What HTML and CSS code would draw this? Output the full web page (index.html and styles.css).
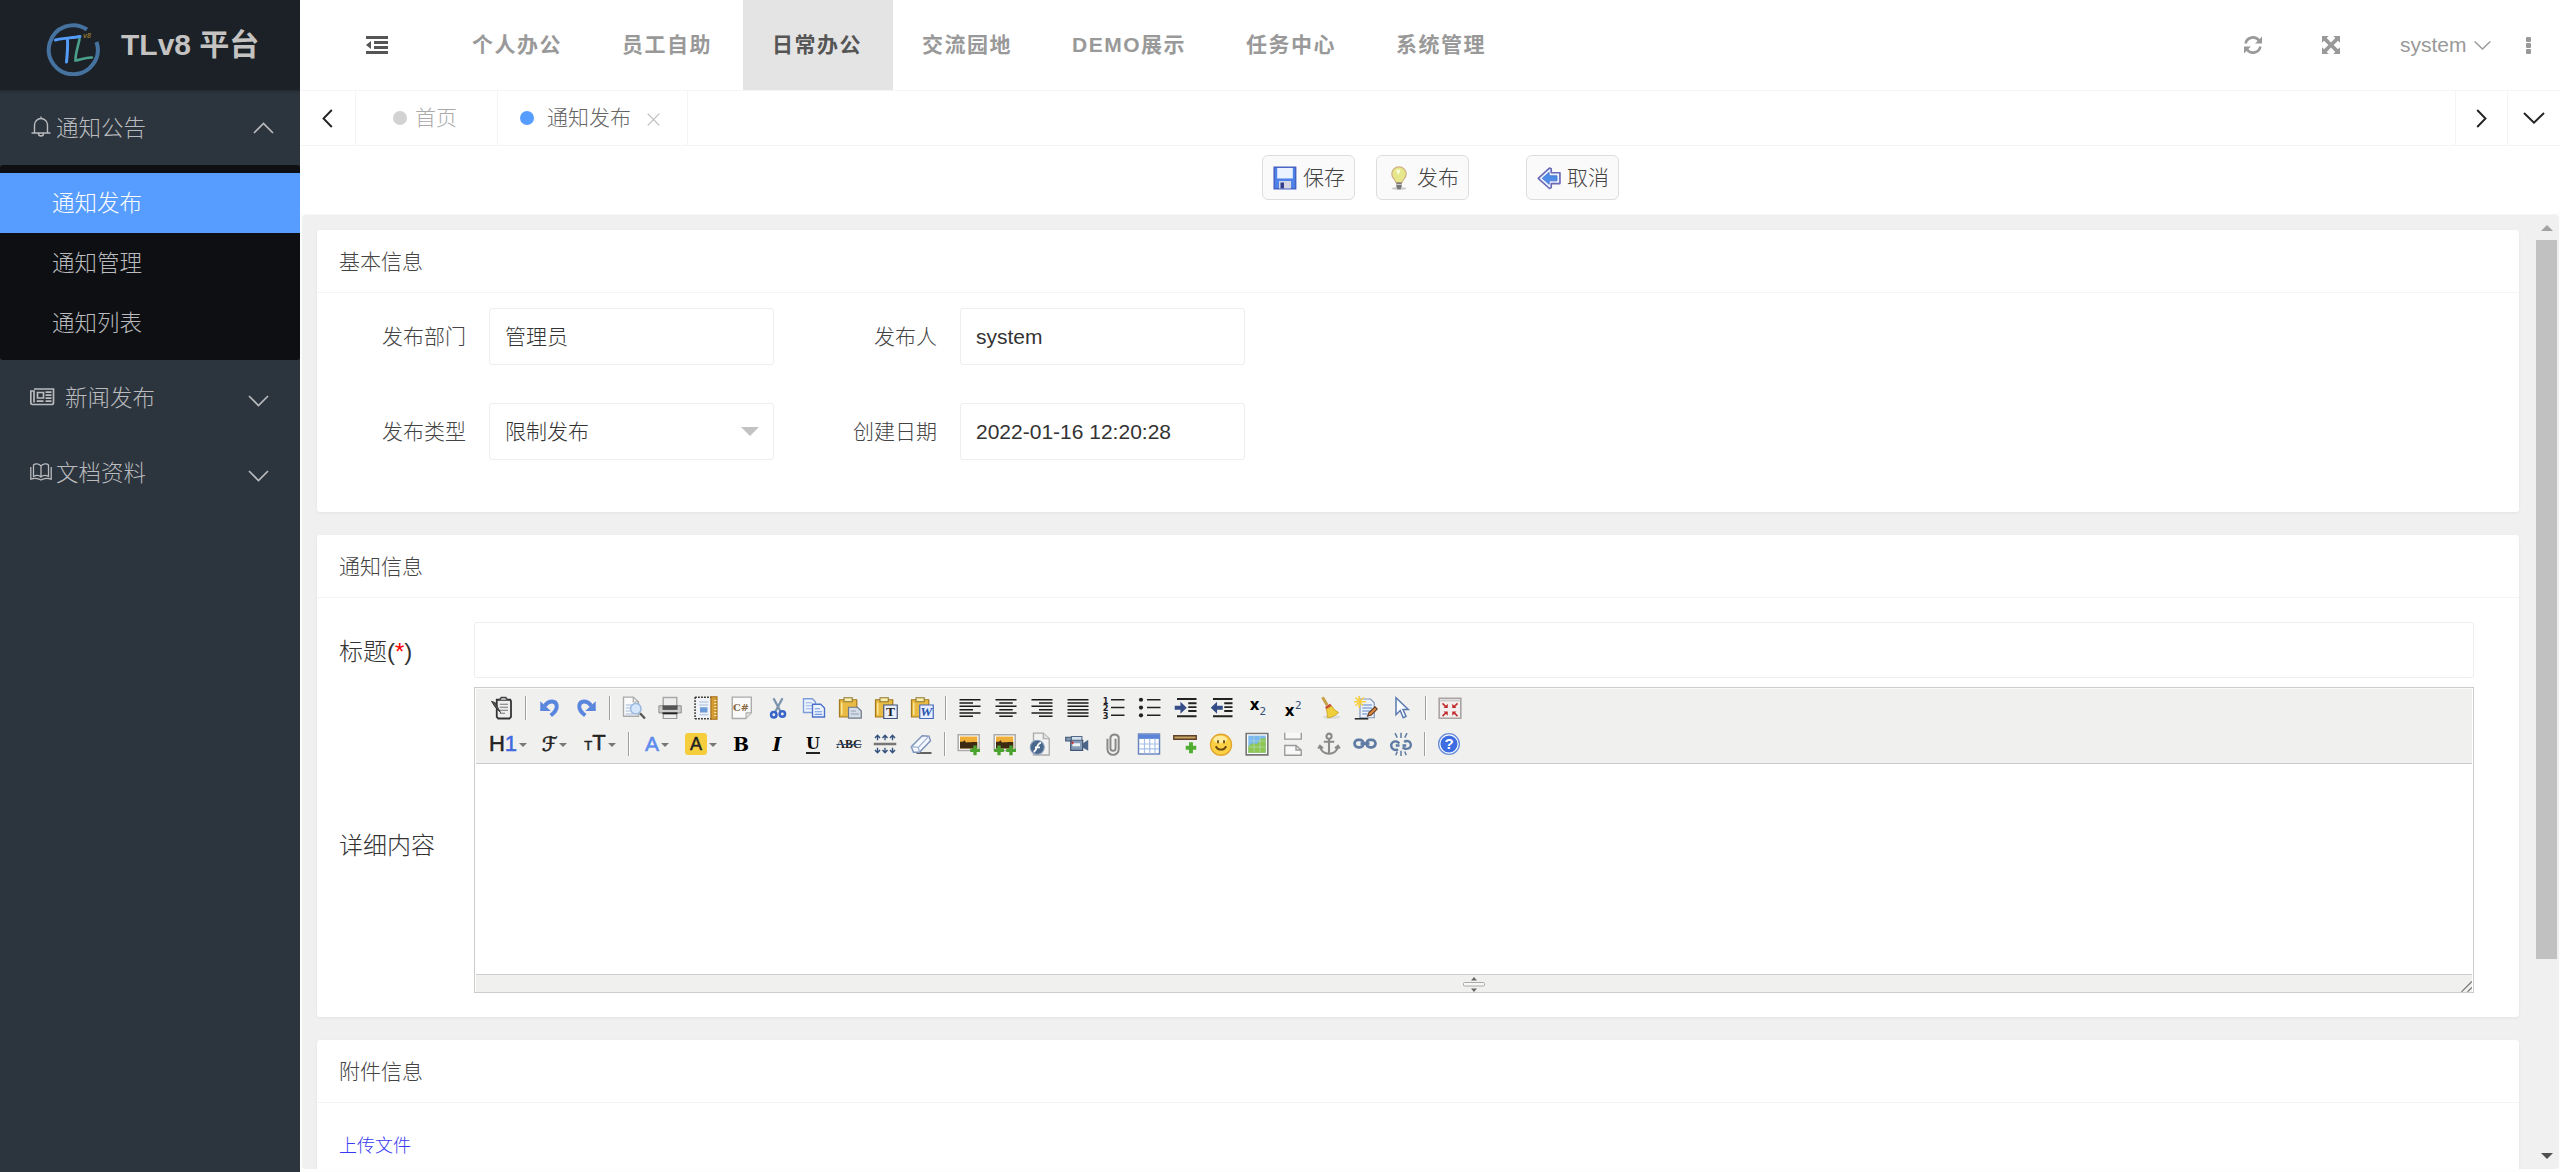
FILE: index.html
```html
<!DOCTYPE html>
<html lang="zh-CN">
<head>
<meta charset="utf-8">
<title>TLv8 平台</title>
<link rel="stylesheet" href="styles.css">
</head>
<body>
<div class="app">
  <aside class="side">
    <div class="logo">
      <svg class="logo-mark" width="54" height="54" viewBox="0 0 54 54" fill="none" stroke-linecap="round">
        <path d="M41 7.500A24.500 24.500 0 1 0 50.500 20" stroke="#4672a0" stroke-width="4" stroke-linecap="butt"/>
        <path d="M9.500 18C17 16 26 16 34 14.500M21.500 17.500C22 26 21 34 20.500 40" stroke="#559cf8" stroke-width="3"/>
        <path d="M33.500 17C32 25 29 33 29.500 38.500C34 38 40 35 46 35.500" stroke="#4b9f8d" stroke-width="2.600"/>
        <text x="37" y="15.500" class="logo-ver">v8</text>
      </svg>
      <h1 class="logo-name">TLv8 平台</h1>
    </div>
    <nav class="menu">
      <a class="menu-item">
        <svg class="bell" width="20" height="22" viewBox="0 0 20 22" fill="none" stroke="currentColor" stroke-width="1.400"><path d="M3.500 17V9a6.500 6.500 0 0 1 13 0v8M.5 17h19M7.500 17.500a2.500 2.500 0 0 0 5 0M10 .5v2"/></svg>
        <span class="menu-text">通知公告</span>
        <svg class="arrow arrow-up" width="21" height="12" viewBox="0 0 21 12" fill="none" stroke="currentColor" stroke-width="1.700"><path d="M1 11l9.500-9.500L20 11"/></svg>
      </a>
      <div class="submenu">
        <a class="sub-item active">通知发布</a>
        <a class="sub-item">通知管理</a>
        <a class="sub-item">通知列表</a>
      </div>
      <a class="menu-item wide">
        <svg class="news" width="25" height="18" viewBox="0 0 25 18" fill="none" stroke="currentColor" stroke-width="1.700"><path d="M4 1h19.500v13.500a2 2 0 0 1-2 2H2.500a2 2 0 0 1-1.700-2V3H4v11.500M7.500 4.500h6V10h-6zM15.500 4.200h6M15.500 7.200h6M15.500 10.200h6M6.700 13.200h6.800M15.500 13.200h6"/></svg>
        <span class="menu-text">新闻发布</span>
        <svg class="arrow" width="21" height="12" viewBox="0 0 21 12" fill="none" stroke="currentColor" stroke-width="1.700"><path d="M1 1l9.500 9.500L20 1"/></svg>
      </a>
      <a class="menu-item">
        <svg class="book" width="22" height="18" viewBox="0 0 22 18" fill="none" stroke="currentColor" stroke-width="1.300"><path d="M11 3C9 .3 5 .3 3.500 2v11.500C6 12 9 12 11 14c2-2 5-2 7.500-.5V2C17 .3 13 .3 11 3v11M.8 4v12.200C5 14.800 8 15 11 17c3-2 6-2.200 10.200-.8V4"/></svg>
        <span class="menu-text">文档资料</span>
        <svg class="arrow" width="21" height="12" viewBox="0 0 21 12" fill="none" stroke="currentColor" stroke-width="1.700"><path d="M1 1l9.500 9.500L20 1"/></svg>
      </a>
    </nav>
  </aside>

  <div class="main">
    <header class="header">
      <a class="fold">
        <svg width="22" height="18" viewBox="0 0 22 18" fill="#555"><path d="M0 0h22v3H0zM8 5h14v3H8zM8 10h14v3H8zM0 15h22v3H0zM0 9l5-4v8z"/></svg>
      </a>
      <nav class="top-nav">
        <a>个人办公</a><a>员工自助</a><a class="on">日常办公</a><a>交流园地</a><a>DEMO展示</a><a>任务中心</a><a>系统管理</a>
      </nav>
      <div class="tools">
        <svg class="t-refresh" width="18" height="18" viewBox="0 0 18 18" fill="none" stroke="#999" stroke-width="2.600"><path d="M1.600 7.500A7.500 7.500 0 0 1 15 4.500M16.400 10.500A7.500 7.500 0 0 1 3 13.500"/><path d="M18 .6v6.900h-6.900zM0 17.400v-6.900h6.900z" fill="#999" stroke="none"/></svg>
        <svg class="t-full" width="18" height="18" viewBox="0 0 18 18" fill="#999"><path d="M0 0h6.700L4.700 2 9 6.400 13.300 2l-2-2H18v6.700l-2-2L11.600 9l4.400 4.300 2-2V18h-6.700l2-2L9 11.600 4.700 16l2 2H0v-6.700l2 2L6.400 9 2 4.700l-2 2z"/></svg>
        <a class="user">system<svg width="17" height="9" viewBox="0 0 17 9" fill="none" stroke="#999" stroke-width="1.400"><path d="M.7.500l7.800 7.500L16.300.5"/></svg></a>
        <svg class="t-more" width="5" height="17" viewBox="0 0 5 17" fill="#999"><rect width="5" height="5" rx="1"/><rect y="6" width="5" height="5" rx="1"/><rect y="12" width="5" height="5" rx="1"/></svg>
      </div>
    </header>

    <div class="tabs">
      <a class="tab-ctl prev"><svg width="11" height="19" viewBox="0 0 11 19" fill="none" stroke="#222" stroke-width="1.900"><path d="M9.800 1L1.500 9.500l8.300 8.500"/></svg></a>
      <a class="tab"><i class="dot"></i><span>首页</span></a>
      <a class="tab current"><i class="dot"></i><span>通知发布</span><svg class="close" width="13" height="13" viewBox="0 0 13 13" stroke="#bbb" stroke-width="1.200"><path d="M.7.700l11.600 11.600M12.300.7L.7 12.300"/></svg></a>
      <a class="tab-ctl next"><svg width="11" height="19" viewBox="0 0 11 19" fill="none" stroke="#222" stroke-width="1.900"><path d="M1.200 1l8.300 8.500L1.200 18"/></svg></a>
      <a class="tab-ctl more"><svg width="22" height="12" viewBox="0 0 22 12" fill="none" stroke="#222" stroke-width="1.900"><path d="M1 1l10 9.700L21 1"/></svg></a>
    </div>

    <div class="actions">
      <button class="btn">
        <svg width="24" height="24" viewBox="0 0 16 16"><path d="M.8.8h14.300v14.300H.8z" fill="#4f82e8" stroke="#4560c4"/><path d="M2.800 1.300h10.400v7H2.800z" fill="#eaf3ff"/><path d="M4 10h8v5H4z" fill="#d5d6e2"/><path d="M5 11h2.300v4H5z" fill="#2f3c8c"/></svg>
        <span>保存</span>
      </button>
      <button class="btn">
        <svg width="24" height="24" viewBox="0 0 16 16"><ellipse cx="8" cy="15" rx="5" ry="1" fill="#ccc"/><path d="M8 .6a4.700 4.700 0 0 1 4.800 4.700C12.800 8 10.500 9 10 11H6C5.500 9 3.200 8 3.200 5.300A4.700 4.700 0 0 1 8 .6z" fill="#e6e78a" stroke="#d0b183" stroke-width=".8"/><path d="M6 3c1-1 2-1 3 0L7.500 6z" fill="#fbfcdc"/><path d="M6.200 11h3.600v2.500L9 15.500H7l-.8-2z" fill="#777"/><path d="M6.200 12.300h3.600" stroke="#ddd" stroke-width=".6"/></svg>
        <span>发布</span>
      </button>
      <button class="btn cancel">
        <svg width="24" height="24" viewBox="0 0 16 16" stroke-linejoin="round"><path d="M.8 8.200L8.300 1.400l1.200.4V4.500h5.800v7.200H9.500v2.700l-1.200.6z" fill="#eef1ff" stroke="#6a6ab8" stroke-width="1.100"/><path d="M3.500 8.200l4.600-4v2.300h5.200v3.400H8.100v2.300z" fill="#4f8ce8" stroke="#3a6cc8" stroke-width=".5"/></svg>
        <span>取消</span>
      </button>
    </div>

    <div class="frame">
      <div class="content">
        <section class="card basic">
          <h2 class="card-head">基本信息</h2>
          <div class="form">
            <label>发布部门</label><div class="field">管理员</div>
            <label>发布人</label><div class="field">system</div>
            <label>发布类型</label><div class="field select">限制发布<i class="caret"></i></div>
            <label>创建日期</label><div class="field">2022-01-16 12:20:28</div>
          </div>
        </section>

        <section class="card notice">
          <h2 class="card-head">通知信息</h2>
          <div class="rows">
            <label class="title-label">标题(<em>*</em>)</label>
            <div class="field title-field"></div>
            <label class="body-label">详细内容</label>
            <div class="editor">
              <div class="toolbar">
                <div class="tb-row">
                  <svg class="ic" viewBox="0 0 16 16"><path d="M4.500 2.500h9l.5 1V14l-1 1H5.500l-1-1z" fill="#eee" stroke="#333" stroke-width="1.200"/><path d="M6.500 2.500l1-1.500h3l1 1.500" fill="#ddd" stroke="#444"/><path d="M6.500 5.500H12M6.500 7.500H12M6.500 9.500H12M6.500 11.500H10" stroke="#777" stroke-width=".8"/><path d="M1 3.500l2.500 1L7 11 3.500 7.500z" fill="#555" stroke="#333" stroke-width=".6"/></svg>
                  <i class="sep"></i>
                  <svg class="ic" viewBox="0 0 16 16" fill="none"><path d="M4.500 6.500C7.500 2.500 12 3 12.500 6.500c.2 3-1.500 4.500-4 6.500" stroke="#5b86de" stroke-width="2.600"/><path d="M1.500 3.500V10h7z" fill="#5b86de"/></svg>
                  <svg class="ic flip" viewBox="0 0 16 16" fill="none"><path d="M4.500 6.500C7.500 2.500 12 3 12.500 6.500c.2 3-1.500 4.500-4 6.500" stroke="#5b86de" stroke-width="2.600"/><path d="M1.500 3.500V10h7z" fill="#5b86de"/></svg>
                  <i class="sep"></i>
                  <svg class="ic" viewBox="0 0 16 16"><path d="M1 .7h6.500L11 4v9.500H1z" fill="#fafafa" stroke="#aaa" stroke-width=".9"/><path d="M7.500.7V4H11" fill="none" stroke="#aaa" stroke-width=".8"/><path d="M2.500 6h4M2.500 8h3M2.500 10h3M2.500 12h5" stroke="#9db6dd" stroke-width=".8"/><circle cx="9.200" cy="8.500" r="3.500" fill="#d5e6fa" stroke="#9ab7e0"/><path d="M12 11.500l3.300 3.500" stroke="#555" stroke-width="1.500"/></svg>
                  <svg class="ic" viewBox="0 0 16 16"><path d="M3.500 1h9v6h-9z" fill="#eee" stroke="#aaa"/><path d="M.6 6.500h3V9h9V6.500h2.900v4.800H.6z" fill="#ccc" stroke="#888" stroke-width=".6"/><path d="M3 6.200h10v3H3z" fill="#555"/><path d="M3.500 12h9v3h-9z" fill="#eee" stroke="#999" stroke-width=".8"/><path d="M3 11.500h10" stroke="#222" stroke-width="1.200"/></svg>
                  <svg class="ic" viewBox="0 0 16 16"><path d="M.7.800h11M.7 15.200h11M.7.800v14.500" stroke="#333" stroke-width="1" stroke-dasharray="1.200 .8"/><path d="M1.500 1.500h9v13h-9z" fill="#f0f3f8"/><path d="M3.500 4h6M3.500 6h6M3.500 12.500h6" stroke="#a5bcdd" stroke-width=".8"/><path d="M4 7.500h5v3.500H4z" fill="#6d9bd8"/><path d="M11.300.5h4v15h-4z" fill="#d59b35" stroke="#a87119" stroke-width=".8"/><path d="M13.500 3H15M13.500 5H15M13.500 7H15M13.500 9H15M13.500 11H15M13.500 13H15" stroke="#fff0b0" stroke-width=".6"/></svg>
                  <svg class="ic" viewBox="0 0 16 16"><path d="M1.500.7h12.700v10.500L10.500 15h-9z" fill="#fafafa" stroke="#aaa" stroke-width=".9"/><path d="M14.200 11.200h-3.500V15" fill="#ddd" stroke="#aaa" stroke-width=".7"/><text x="2" y="10.300" class="g-code">C#</text></svg>
                  <svg class="ic" viewBox="0 0 16 16" fill="none"><path d="M5 1.500l4.800 9M11 1.500l-4.800 9" stroke="#7b93ad" stroke-width="1.500"/><circle cx="5.200" cy="12.500" r="1.800" stroke="#3965c8" stroke-width="1.700"/><circle cx="10.900" cy="12" r="1.800" stroke="#3965c8" stroke-width="1.700"/></svg>
                  <svg class="ic" viewBox="0 0 16 16"><path d="M1 1.800h6L9 4v7H1z" fill="#edf3fd" stroke="#7d9cd8" stroke-width=".9"/><path d="M2.500 4.500h4M2.500 6.500h5M2.500 8.500h5" stroke="#94b3e8" stroke-width=".8"/><path d="M7 5.500h5.500L15 8v6H7z" fill="#edf3fd" stroke="#4a70cc" stroke-width=".9"/><path d="M8.500 8.500H12M8.500 10.500h5M8.500 12.300h5" stroke="#6f98e2" stroke-width=".8"/></svg>
                  <svg class="ic" viewBox="0 0 16 16"><path d="M1 2.500h11.500V14H1z" fill="#e9bb42" stroke="#a57a1c" stroke-width=".8"/><path d="M4 1.200h5.500v2.600H4z" fill="#f7efb0" stroke="#90762e" stroke-width=".7"/><path d="M2.500 4.500v8" stroke="#f9e69a"/><path d="M7 7.500h6l2.500 2.500v4.700H7z" fill="#d5dde8" stroke="#6c7785" stroke-width=".8"/><path d="M8.500 10H12M8.500 12h5.500" stroke="#93a0b0" stroke-width=".8"/></svg>
                  <svg class="ic" viewBox="0 0 16 16"><path d="M1 2.500h11.500V14H1z" fill="#e9bb42" stroke="#a57a1c" stroke-width=".8"/><path d="M4 1.200h5.500v2.600H4z" fill="#f7efb0" stroke="#90762e" stroke-width=".7"/><path d="M2.500 4.500v8" stroke="#f9e69a"/><path d="M6.500 6h9v9h-9z" fill="#e8eefa" stroke="#43547c" stroke-width=".8"/><text x="8" y="13.600" class="g-paste">T</text></svg>
                  <svg class="ic" viewBox="0 0 16 16"><path d="M1 2.500h11.500V14H1z" fill="#e9bb42" stroke="#a57a1c" stroke-width=".8"/><path d="M4 1.200h5.500v2.600H4z" fill="#f7efb0" stroke="#90762e" stroke-width=".7"/><path d="M2.500 4.500v8" stroke="#f9e69a"/><path d="M6.500 6h9v9h-9z" fill="#e8f0ff" stroke="#4668ba" stroke-width=".8"/><text x="6.800" y="13.400" class="g-paste w">W</text></svg>
                  <i class="sep"></i>
                  <svg class="ic" viewBox="0 0 16 16" stroke="#1c1c1c" stroke-width="1"><path d="M1 2.500h14M1 4.700h9M1 6.900h14M1 9.100h9M1 11.300h14M1 13.500h9"/></svg>
                  <svg class="ic" viewBox="0 0 16 16" stroke="#1c1c1c" stroke-width="1"><path d="M1 2.500h14M3.500 4.700h9M1 6.900h14M3.500 9.100h9M1 11.300h14M3.500 13.500h9"/></svg>
                  <svg class="ic" viewBox="0 0 16 16" stroke="#1c1c1c" stroke-width="1"><path d="M1 2.500h14M6 4.700h9M1 6.900h14M6 9.100h9M1 11.300h14M6 13.500h9"/></svg>
                  <svg class="ic" viewBox="0 0 16 16" stroke="#1c1c1c" stroke-width="1"><path d="M1 2.500h14M1 4.700h14M1 6.900h14M1 9.100h14M1 11.300h14M1 13.500h14"/></svg>
                  <svg class="ic" viewBox="0 0 16 16"><path d="M6 2.500h9M6 7.700h9M6 12.900h9" stroke="#222"/><text x=".5" y="5" class="g-num">1</text><text x=".5" y="10" class="g-num">2</text><text x=".5" y="15.200" class="g-num">3</text></svg>
                  <svg class="ic" viewBox="0 0 16 16" fill="#222"><path d="M6 2.500h9M6 7.700h9M6 12.900h9" stroke="#222"/><circle cx="2" cy="2.500" r="1.400"/><circle cx="2" cy="7.700" r="1.400"/><circle cx="2" cy="12.900" r="1.400"/></svg>
                  <svg class="ic" viewBox="0 0 16 16"><path d="M2 2h13M9.500 4.800H15M9.500 7.400H15M9.500 10H15M2 13.500h13" stroke="#222" stroke-width="1.300"/><path d="M.5 6.500h3.800V3.800L8.500 7.800l-4.200 4V9.200H.5z" fill="#344d86"/></svg>
                  <svg class="ic" viewBox="0 0 16 16"><path d="M2 2h13M9.500 4.800H15M9.500 7.400H15M9.500 10H15M2 13.500h13" stroke="#222" stroke-width="1.300"/><path d="M8.500 6.500H4.700V3.800L.5 7.800l4.200 4V9.200h3.800z" fill="#344d86"/></svg>
                  <svg class="ic" viewBox="0 0 16 16"><text x="2.500" y="9" class="g-x">x</text><text x="9" y="12.500" class="g-s">2</text></svg>
                  <svg class="ic" viewBox="0 0 16 16"><text x="1.800" y="13" class="g-x">x</text><text x="8.700" y="8.500" class="g-s">2</text></svg>
                  <svg class="ic" viewBox="0 0 16 16"><ellipse cx="9" cy="14" rx="6" ry="1.300" fill="#ddd"/><path d="M3 .8l3.300 5.500" stroke="#c9a14a" stroke-width="2"/><path d="M4.700 7.300l3.500-2.100 1 1.500-3.700 2.100z" fill="#c94a37"/><path d="M5.500 8.800l3.700-2.100c1 2 2.500 3 4.500 4.300-2 2-4.500 3.500-7.500 3.500.2-2-.2-4-.7-5.700z" fill="#f0cf3c" stroke="#c9a026" stroke-width=".6"/></svg>
                  <svg class="ic" viewBox="0 0 16 16"><path d="M4 2h7l2.500 2.500v10H4z" fill="#edf2fb" stroke="#8296bb" stroke-width=".8"/><path d="M5.500 6H12M5.500 8H12M5.500 10H11M5.500 12H9" stroke="#5b84c8" stroke-width=".8"/><path d="M3.500 0v8M0 3.800h8M1 1l5 5.500M6.500 1l-5.500 5.500" stroke="#f6cf43" stroke-width="1.100"/><path d="M9 13.500l1-2.500 4-3.800 1.500 1.500-4 4z" fill="#dd8540" stroke="#5d3b1d" stroke-width=".7"/><path d="M.5 15.200h9" stroke="#222"/></svg>
                  <svg class="ic" viewBox="0 0 16 16"><path d="M4 1.200v11.300l2.800-2.800 2 4.800 1.900-.9-2-4.600h3.500z" fill="#f8fbff" stroke="#5b7ab0" stroke-width="1"/></svg>
                  <i class="sep"></i>
                  <svg class="ic" viewBox="0 0 16 16"><path d="M.8 1.500h14.400v13.300H.8z" fill="#f3efee" stroke="#aaa4a3" stroke-width="1.100"/><path d="M1.500 3h13" stroke="#ccc" stroke-width="1.300"/><path d="M6.500 8V5.200L3.700 8zM9.500 8V5.200L12.300 8zM6.500 10.300v2.800l-2.800-2.800zM9.500 10.300v2.800l2.800-2.800z" fill="#c12b2b"/><path d="M3 4.900l2.500 2.500M13 4.900l-2.500 2.500M3 13.400l2.500-2.500M13 13.400l-2.500-2.500" stroke="#c12b2b" stroke-width="1"/></svg>
                </div>
                <div class="tb-row">
                  <span class="tx w48"><b class="h1-ic">H<u>1</u></b><i class="dd"></i></span>
                  <span class="tx w45"><b class="f-ic">ℱ</b><i class="dd"></i></span>
                  <span class="tx w46"><b class="t-ic"><small>T</small>T</b><i class="dd"></i></span>
                  <i class="sep"></i>
                  <span class="tx w44"><b class="a-ic">A</b><i class="dd"></i></span>
                  <span class="tx w44"><b class="a-bg">A</b><i class="dd"></i></span>
                  <span class="tx w36"><b class="b-ic">B</b></span>
                  <span class="tx w36"><b class="i-ic">I</b></span>
                  <span class="tx w36"><b class="u-ic">U</b></span>
                  <span class="tx w36"><b class="s-ic">ABC</b></span>
                  <svg class="ic" viewBox="0 0 16 16" fill="none" stroke="#33507c" stroke-width=".9"><path d="M.5 8h15" stroke="#777" stroke-width="1.700"/><path d="M3 5.500V2M1.300 4L3 2.200 4.700 4M8 5.500V2M6.300 4L8 2.200 9.700 4M13 5.500V2M11.300 4L13 2.200 14.700 4M3 10.500V14M1.300 12L3 13.800 4.700 12M8 10.500V14M6.300 12L8 13.800 9.700 12M13 10.500V14M11.300 12l1.700 1.800 1.700-1.800"/></svg>
                  <svg class="ic" viewBox="0 0 16 16"><path d="M5 14h10" stroke="#333"/><path d="M1.500 9.800L8.800 2.500l4.500.3 1 3L7 13.500H3z" fill="#f5f8fe" stroke="#7f94bb" stroke-width="1"/><path d="M1.500 9.800l4.700.5L13.300 2.800M6.200 10.300L7 13.500" fill="none" stroke="#9db0d4" stroke-width=".8"/></svg>
                  <i class="sep"></i>
                  <svg class="ic" viewBox="0 0 16 16"><path d="M.8 1.800h14v10.500H.8z" fill="#fff" stroke="#aaa"/><path d="M2 3h11.500v8H2z" fill="#eeae38"/><path d="M2 8V6.500h2L5 5.500l1 1.500c3-.3 5-.5 7.500-.3V11H2z" fill="#3c2b12"/><path d="M12 9v6.500M8.800 12.200h6.500" stroke="#4aa32f" stroke-width="2.200"/></svg>
                  <svg class="ic" viewBox="0 0 16 16"><path d="M.8 1.800h14v10.500H.8z" fill="#fff" stroke="#aaa"/><path d="M2 3h11.500v8H2z" fill="#eeae38"/><path d="M2 8V6.500h2L5 5.500l1 1.500c3-.3 5-.5 7.500-.3V11H2z" fill="#3c2b12"/><path d="M12 9v6.500M8.800 12.200h6.500M4 9v6.500M.8 12.200h6.500" stroke="#4aa32f" stroke-width="2.200"/></svg>
                  <svg class="ic" viewBox="0 0 16 16"><path d="M3 .7h6.500L13.500 4.500v10.800H3z" fill="#f2f2f2" stroke="#aaa" stroke-width=".9"/><path d="M9.500.7v3.800h4" fill="#ddd" stroke="#aaa" stroke-width=".8"/><circle cx="5.500" cy="10.200" r="4.700" fill="#4a678c" stroke="#8da2bf" stroke-width=".7"/><path d="M8 7.200c-3 0-2.500 5.500-5 6M4 10.200h3.300" stroke="#fff" stroke-width="1.200" fill="none"/></svg>
                  <svg class="ic" viewBox="0 0 16 16"><path d="M.5 3.500h3.800v2.500H.5zM3.800 5.500h8v6.800h-8z" fill="#879ab5" stroke="#3f5676" stroke-width=".8"/><path d="M4.300 3h7v2.500h-7z" fill="#d5dfec" stroke="#526987" stroke-width=".7"/><path d="M12 7.500l3.500-2.300v7.300L12 10.500z" fill="#4b6487"/><path d="M5 7.500h5v2H5z" fill="#eef3f9"/><circle cx="5" cy="7.200" r=".8" fill="#c33"/></svg>
                  <svg class="ic" viewBox="0 0 16 16" fill="none"><path d="M4.300 4.500V11.500a3.700 3.700 0 0 0 7.500 0V3.500a3 3 0 0 0-5.500 0V10.800a1.700 1.700 0 0 0 3.400 0V4.500" stroke="#888" stroke-width="1.300"/></svg>
                  <svg class="ic" viewBox="0 0 16 16"><path d="M1 1.300h14v13.400H1z" fill="#fff" stroke="#6b87c0"/><path d="M1.300 1.600h13.400v3H1.300z" fill="#5c85d8"/><path d="M1.500 8h13M1.500 11.300h13M5 4.500v10M8.500 4.500v10M12 4.500v10" stroke="#a7bfe8" stroke-width=".8"/></svg>
                  <svg class="ic" viewBox="0 0 16 16"><path d="M.5 2.500h15v2.300H.5z" fill="#c7a560" stroke="#5d3f2c" stroke-width=".9"/><path d="M12 6.800v7.400M8.500 10.500h7" stroke="#4fae32" stroke-width="2.600"/></svg>
                  <svg class="ic" viewBox="0 0 16 16"><circle cx="8" cy="8.500" r="7" fill="#fbd043" stroke="#e2a52f" stroke-width=".9"/><ellipse cx="7.500" cy="5" rx="4.500" ry="2.500" fill="#fdeb9d"/><path d="M6 5.500v2M10 5.500v2M4.500 9.500c1.500 3 5.500 3 7 0" stroke="#6b4a12" stroke-width="1.200" fill="none"/></svg>
                  <svg class="ic" viewBox="0 0 16 16"><path d="M.8 1h14.400v14.200H.8z" fill="#fff" stroke="#777" stroke-width="1.100"/><path d="M2.200 2.400h11.600v11.400H2.200z" fill="#7ab8f0"/><path d="M2.200 9.500L5 7.500l3 .5 2.500-3.500 3.300-.5v9.800H2.200z" fill="#8ec652"/><path d="M6 2.500v11M10 2.500v11M2.500 6h11M2.500 10h11" stroke="#b8dcc8" stroke-width=".4"/></svg>
                  <svg class="ic" viewBox="0 0 16 16" fill="#f8f8f8" stroke="#999" stroke-width=".9"><path d="M2.500.5v4.200h11V.5M2.500 15.500V9h7.500l3.500 3v3.500zM10 9v3h3.500"/></svg>
                  <svg class="ic" viewBox="0 0 16 16" fill="none" stroke="#8a8a8a" stroke-width="1.400"><circle cx="8" cy="2.800" r="1.700"/><path d="M8 4.500v10M4.500 6.500h7M2 9.500c.5 3 3 5 6 5s5.500-2 6-5M.8 11L2 9.200 4 10.800M15.200 11L14 9.200 12 10.800"/></svg>
                  <svg class="ic" viewBox="0 0 16 16" fill="none" stroke="#5f7ba3" stroke-width="1.800"><rect x="1" y="5.200" width="6" height="5" rx="2.500"/><rect x="9" y="5.200" width="6" height="5" rx="2.500"/><path d="M5 7.700h6"/></svg>
                  <svg class="ic" viewBox="0 0 16 16" fill="none" stroke="#5f7ba3" stroke-width="1.600"><path d="M7 7.500L5 6.300C3 6 1.200 7.300 1.500 9.500s3 3 4.500 2M9 10.500l2 .7c2.500.3 4-1.200 3.500-3.200S12 5.500 10 6.500M4.500 9h2.500M9 9h2.500"/><path d="M8 .5v3.500M4 .8l1.500 3M12 .8l-1.500 3M8 12.500V16M4.500 15.500L5.500 13M11.500 15.500l-1-2.500" stroke-width="1"/></svg>
                  <i class="sep"></i>
                  <svg class="ic" viewBox="0 0 16 16"><circle cx="8" cy="8" r="6.900" fill="#fff" stroke="#6b8fda" stroke-width=".9"/><circle cx="8" cy="8" r="5.700" fill="#3d6de0"/><text x="5" y="11.500" class="g-help">?</text></svg>
                </div>
              </div>
              <div class="edit-area"></div>
              <div class="status">
                <svg class="grip" width="22" height="15" viewBox="0 0 22 15"><path d="M8 3.500L11 0l3 3.500zM8 11.500l3 3.500 3-3.500z" fill="#666"/><rect x=".5" y="5.500" width="21" height="3.500" rx="1" fill="#f7f7f7" stroke="#aaa"/></svg>
                <svg class="corner" width="11" height="11" viewBox="0 0 11 11" stroke="#777" stroke-width="1.200"><path d="M.5 10.800L10.800.5M6.500 10.800l4.300-4.300"/></svg>
              </div>
            </div>
          </div>
        </section>

        <section class="card attach">
          <h2 class="card-head">附件信息</h2>
          <a class="upload">上传文件</a>
        </section>
      </div>
      <div class="scroll"><i class="sc-up"></i><i class="thumb"></i><i class="sc-down"></i></div>
    </div>
  </div>
</div>
</body>
</html>
```
FILE: styles.css
```css
* { box-sizing: border-box; }
html, body { margin: 0; height: 100%; overflow: hidden; }
body {
  font: 300 21px/1.2 "Liberation Sans", "Noto Sans CJK SC", sans-serif;
  color: #444;
  background: #fdfdfd;
}
h1, h2 { margin: 0; font-weight: inherit; }
i, em { font-style: normal; }
svg { flex: none; display: block; }

.app { display: flex; width: 2560px; height: 1172px; }

/* sidebar */
.side { width: 300px; background: #2c343d; color: #b9bbbe; }
.logo { display: flex; align-items: center; height: 90px; padding: 4px 0 0 46px; background: #1c2127; box-shadow: 0 1px 3px rgba(0,0,0,.25); }
.logo-mark { margin-top: 3px; }
.logo-ver { font: italic bold 7px "Liberation Sans", sans-serif; fill: #8f7430; }
.logo-name { margin: -5px 0 0 21px; font-size: 30px; font-weight: bold; color: #c4c3c2; white-space: nowrap; }
.menu-item { display: flex; align-items: center; height: 75px; padding: 2px 31px 0 30px; font-size: 22.5px; }
.menu-text { margin-left: 4px; flex: 1; }
.bell { margin: -3px 1px 0 1px; }
.news, .book { margin-top: -4px; }
.wide .menu-text { margin-left: 10px; }
.arrow { margin-top: 4px; }
.arrow-up { margin: -2px -5px 0 0; }
.submenu { height: 195px; padding-top: 8px; background: #0d0f12; border-radius: 3px; font-size: 22.5px; }
.sub-item { display: flex; align-items: center; height: 60px; padding-left: 52px; }
.sub-item.active { background: #579dff; color: #fff; }

/* header */
.main { flex: 1; display: flex; flex-direction: column; min-width: 0; }
.header { display: flex; align-items: center; height: 91px; border-bottom: 1px solid #f4f4f4; background: #fff; }
.fold { width: 143px; padding: 0 0 0 66px; }
.top-nav { display: flex; flex: 1; height: 90px; align-self: flex-start; font-size: 21px; letter-spacing: 1.5px; font-weight: bold; color: #999; }
.top-nav a { display: flex; align-items: center; padding: 0 31px 0 29px; }
.top-nav .on { background: #e4e4e4; color: #555; }
.tools { display: flex; align-items: center; width: 316px; color: #999; }
.t-full { margin-left: 60px; }
.user { display: flex; align-items: center; margin-left: 60px; width: 91px; justify-content: space-between; }
.t-more { margin-left: 35px; }

/* tabs */
.tabs { display: flex; height: 55px; border-bottom: 1px solid #f4f4f4; background: #fff; }
.tab, .tab-ctl { display: flex; align-items: center; border-right: 1px solid #f4f4f4; }
.tab-ctl { justify-content: center; width: 52px; border: 0 solid #f4f4f4; border-left-width: 1px; }
.prev { width: 56px; border-width: 0 1px 0 0; }
.next { margin-left: auto; }
.more { width: 53px; }
.tab { width: 142px; padding-left: 37px; color: #aaa; }
.tab.current { width: 190px; padding-left: 22px; color: #666; }
.dot { width: 14px; height: 14px; margin-right: 8px; border-radius: 50%; background: #d2d2d2; }
.current .dot { margin-right: 13px; background: #579dff; }
.close { margin: 2px 0 0 16px; }

/* action bar */
.actions { display: flex; height: 69px; padding: 9px 0 0 962px; background: #fff; border-radius: 0 0 4px 4px; border-bottom: 1px solid #f6f6f6; }
.btn { display: flex; align-items: center; gap: 6px; width: 93px; height: 45px; margin: 0 21px 0 0; padding: 0 0 0 10px; border: 1px solid #ddd; border-radius: 6px; background: #fafafa; font: inherit; color: #444; white-space: nowrap; }
.cancel { margin-left: 36px; }

/* page frame */
.frame { display: flex; height: 954px; margin: 0 1px 0 2px; background: #f0f0f0; border-radius: 4px; overflow: hidden; }
.content { width: 2202px; margin: 15px 17px 0 15px; }
.card { background: #fff; border-radius: 3px; box-shadow: 0 1px 3px rgba(0,0,0,.06); }
.card + .card { margin-top: 23px; }
.card-head { display: flex; align-items: center; height: 63px; padding: 1px 0 0 22px; border-bottom: 1px solid #f4f4f4; font-size: 21px; }
.basic { height: 282px; }
.form { display: grid; grid-template-columns: 172px 285px 186px 285px; row-gap: 38px; padding: 15px 0; align-items: center; }
.form label { text-align: right; padding-right: 23px; }
.field { display: flex; align-items: center; height: 57px; padding-left: 15px; border: 1px solid #eee; border-radius: 3px; color: #333; }
.select { justify-content: space-between; padding-right: 14px; }
.caret { border: 9px solid transparent; border-top-color: #c2c2c2; border-bottom: 0; }

.notice { height: 482px; }
.rows { display: grid; grid-template-columns: 135px 2000px; row-gap: 9px; padding: 24px 0 0 22px; align-items: center; }
.rows label { font-size: 24px; color: #333; }
.title-label { padding-top: 5px; }
.body-label { padding-top: 13px; }
.rows em { color: #f00; }
.title-field { height: 56px; }
.editor { height: 306px; border: 1px solid #ccc; padding: 0 1px; display: flex; flex-direction: column; }
.toolbar { height: 76px; padding: 1px 0 0 8px; background: #f0f0ee; border-bottom: 1px solid #ccc; border-top: 1px solid #fafafa; }
.tb-row { display: flex; align-items: center; height: 36px; }
.ic { width: 24px; height: 24px; margin: 0 6px; }
.flip { transform: scaleX(-1); }
.sep { width: 2px; height: 24px; margin: 0 5px; border-left: 1px solid #a0a0a0; border-right: 1px solid #fff; }
.tx { display: flex; align-items: center; justify-content: center; line-height: 24px; color: #222; }
.tx b { font-weight: normal; }
.w48 { width: 48px; } .w45 { width: 45px; } .w46 { width: 46px; } .w44 { width: 44px; } .w36 { width: 36px; }
.dd { margin-left: 2px; margin-top: 2px; border: 4px solid transparent; border-top-color: #777; border-bottom: 0; }
.h1-ic { font-size: 22px; -webkit-text-stroke: .5px; }
.h1-ic u { color: #4169e1; text-decoration: none; }
.f-ic { font: 20px/24px "DejaVu Sans", sans-serif; -webkit-text-stroke: .6px; }
.t-ic { font-size: 22px; -webkit-text-stroke: .5px; }
.t-ic small { font-size: 13px; }
.a-ic { font-size: 21px; color: #5c8aef; -webkit-text-stroke: .5px; }
.a-bg { width: 22px; height: 22px; border-radius: 3px; background: #f5cd3d; text-align: center; font-size: 18px; line-height: 22px; -webkit-text-stroke: .5px; }
.tx .b-ic, .tx .i-ic, .tx .u-ic { font: bold 19px/22px "DejaVu Serif", serif; color: #000; }
.tx .i-ic { font-style: italic; }
.tx .u-ic { font-size: 16px; line-height: 17px; border-bottom: 2px solid #222; }
.tx .s-ic { font: bold 12px/14px "Liberation Serif", serif; text-decoration: line-through #33507c; }
.g-code { font: bold 6.500px "DejaVu Serif", serif; fill: #85673d; }
.g-paste { font: bold 9px "Liberation Serif", serif; fill: #222; }
.w { font-style: italic; fill: #2950ae; }
.g-num { font: bold 5.500px "DejaVu Sans", sans-serif; fill: #222; }
.g-x { font: bold 10px "DejaVu Sans", sans-serif; fill: #000; }
.g-s { font: 7px "DejaVu Sans", sans-serif; fill: #33507c; }
.g-help { font: bold 10px "Liberation Sans", sans-serif; fill: #fff; }
.edit-area { flex: 1; }
.status { position: relative; display: flex; justify-content: center; height: 18px; padding-top: 2px; background: #f0f0ee; border-top: 1px solid #ccc; }
.corner { position: absolute; right: 0; bottom: 0; }

.attach { height: 200px; }
.upload { display: block; padding: 33px 0 0 22px; font-size: 18px; color: #3a3af2; }

/* scrollbar */
.scroll { display: flex; flex-direction: column; align-items: center; width: 21px; margin-top: 10px; height: 934px; }
.sc-up { border: 6px solid transparent; border-bottom-color: #a3a3a3; border-top: 0; }
.thumb { width: 21px; height: 719px; margin-top: 9px; background: #c1c1c1; }
.sc-down { margin-top: auto; border: 6px solid transparent; border-top-color: #505050; border-bottom: 0; }
```
